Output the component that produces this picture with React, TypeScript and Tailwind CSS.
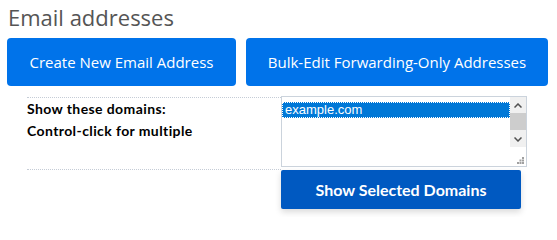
import React from "react";

export default function App() {
  return (
    <div className="w-[557px] h-[217px] bg-white overflow-hidden relative">
      <h1 className="pl-[8px] pt-[1px] h-[38px] text-[22px] leading-[32px] text-[#555555] font-['Open_Sans',sans-serif] font-normal">
        Email addresses
      </h1>
      <div className="flex gap-[10px] pl-[7px]">
        <button className="w-[229px] h-[48px] rounded-[4px] bg-[#0073ea] text-white text-[15px] font-['Open_Sans',sans-serif]">
          Create New Email Address
        </button>
        <button className="w-[302px] h-[48px] rounded-[4px] bg-[#0073ea] text-white text-[15px] font-['Open_Sans',sans-serif]">
          Bulk-Edit Forwarding-Only Addresses
        </button>
      </div>
      <div className="ml-[27px] mt-[11px] w-[254px] h-[73px] border-t border-b border-dotted border-[#c5ccd6] flex">
        <div className="pt-[0px] font-['Lato',sans-serif] font-bold text-[14px] tracking-[0.4px] leading-[22px] text-black">
          <div>Show these domains:</div>
          <div>Control-click for multiple</div>
        </div>
      </div>
      <div className="absolute left-[281px] top-[96px] w-[246px] h-[71px] border border-[#cbd3dc] bg-white flex">
        <div className="flex-1 pt-[5px]">
          <div className="h-[16px] bg-[#0078d7] outline outline-1 outline-dotted outline-white -outline-offset-1 text-white text-[13px] leading-[16px] pl-[3px] font-['Liberation_Sans',sans-serif]">
            example.com
          </div>
        </div>
        <div className="w-[16px] flex flex-col bg-[#f0f0f0]">
          <div className="h-[16px] flex items-center justify-center">
            <svg width="8" height="5" viewBox="0 0 8 5"><path d="M0.5 4.5 L4 1 L7.5 4.5" stroke="#505050" strokeWidth="1.5" fill="none" /></svg>
          </div>
          <div className="h-[17px] bg-[#cdcdcd]" />
          <div className="h-[16px] flex items-center justify-center mt-[1px]">
            <svg width="8" height="5" viewBox="0 0 8 5"><path d="M0.5 0.5 L4 4 L7.5 0.5" stroke="#505050" strokeWidth="1.5" fill="none" /></svg>
          </div>
          <div className="flex-1 bg-white flex items-end justify-end pr-[2px] pb-[2px]">
            <svg width="7" height="7" viewBox="0 0 7 7" fill="#a0a0a0">
              <rect x="5" y="0" width="2" height="2" />
              <rect x="2.5" y="2.5" width="2" height="2" />
              <rect x="5" y="2.5" width="2" height="2" />
              <rect x="0" y="5" width="2" height="2" />
              <rect x="2.5" y="5" width="2" height="2" />
              <rect x="5" y="5" width="2" height="2" />
            </svg>
          </div>
        </div>
      </div>
      <button className="absolute left-[281px] top-[170px] w-[240px] h-[39px] rounded-[2px] bg-[#0059c1] text-white text-[16px] font-bold font-['Lato',sans-serif] shadow-[0_3px_6px_rgba(0,0,0,0.15)]">
        Show Selected Domains
      </button>
    </div>
  );
}
